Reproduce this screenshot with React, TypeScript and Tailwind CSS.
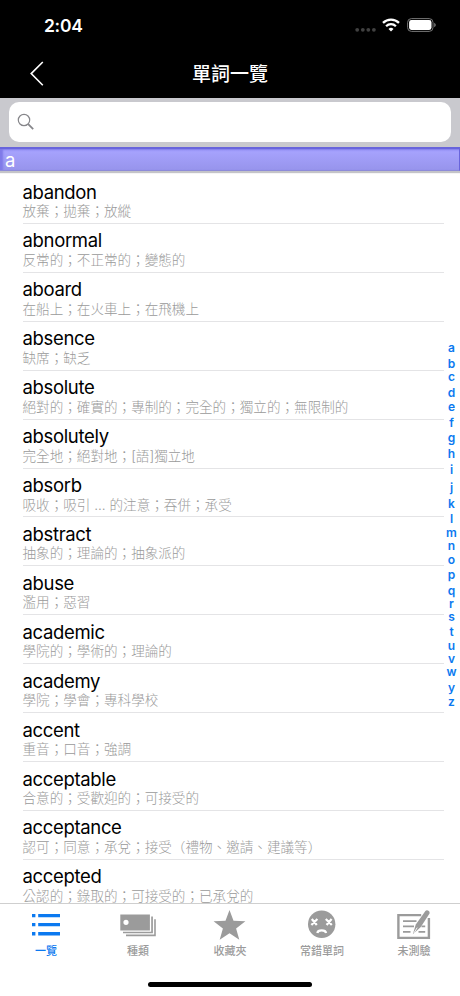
import React, { useState } from 'react';

interface Word {
  term: string;
  meaning: string;
}

const words: Word[] = [
  { term: 'abandon', meaning: '放棄；拋棄；放縱' },
  { term: 'abnormal', meaning: '反常的；不正常的；變態的' },
  { term: 'aboard', meaning: '在船上；在火車上；在飛機上' },
  { term: 'absence', meaning: '缺席；缺乏' },
  { term: 'absolute', meaning: '絕對的；確實的；專制的；完全的；獨立的；無限制的' },
  { term: 'absolutely', meaning: '完全地；絕對地；[語]獨立地' },
  { term: 'absorb', meaning: '吸收；吸引 ... 的注意；吞併；承受' },
  { term: 'abstract', meaning: '抽象的；理論的；抽象派的' },
  { term: 'abuse', meaning: '濫用；惡習' },
  { term: 'academic', meaning: '學院的；學術的；理論的' },
  { term: 'academy', meaning: '學院；學會；專科學校' },
  { term: 'accent', meaning: '重音；口音；強調' },
  { term: 'acceptable', meaning: '合意的；受歡迎的；可接受的' },
  { term: 'acceptance', meaning: '認可；同意；承兌；接受（禮物、邀請、建議等）' },
  { term: 'accepted', meaning: '公認的；錄取的；可接受的；已承兌的' }
];

// Each letter with the height of its slot in the index strip
const indexLetters: [string, number][] = [
  ['a', 14], ['b', 16], ['c', 13.4], ['d', 16], ['e', 13.7], ['f', 16],
  ['g', 15.3], ['h', 15.7], ['i', 15.6], ['j', 18.4], ['k', 15.6], ['l', 15.4],
  ['m', 14], ['n', 13], ['o', 13.6], ['p', 15.7], ['q', 15.7], ['r', 13],
  ['s', 13.3], ['t', 14.7], ['u', 13.6], ['v', 13], ['w', 13.7], ['y', 15.3], ['z', 14]
];

const ListIcon = () => (
  <svg width="30" height="30" viewBox="0 0 30 30" fill="currentColor">
    <path d="M1 3.9h3.4v3.4H1zM7.2 3.9H29v3.4H7.2zM1 12.9h3.4v3.4H1zM7.2 12.9H29v3.4H7.2zM1 22h3.4v3.4H1zM7.2 22H29v3.4H7.2z" />
  </svg>
);

const CardsIcon = () => (
  <svg width="38" height="30" viewBox="0 0 38 30" fill="currentColor">
    <path fillRule="evenodd" d="M1.3 4.4h29.6v16H1.3zM7 9.7a2.6 2.6 0 1 0 0 5.2a2.6 2.6 0 0 0 0-5.2z" />
    <path d="M32.2 6.5h1.7v16.8H4v-1.6h28.2zM35.2 9.2h1.6v17H7v-1.6h28.2z" />
  </svg>
);

const StarIcon = () => (
  <svg width="34" height="30" viewBox="0 0 34 30" fill="currentColor">
    <path d="M16.5 0l4 10.8 11.9.5-9.3 7.2 3.2 11.2-9.8-6.5-9.8 6.5 3.2-11.2L.6 11.3l11.9-.5z" />
  </svg>
);

const SadIcon = () => (
  <svg width="30" height="30" viewBox="0 0 30 30" fill="none">
    <circle cx="14.7" cy="14.3" r="13.7" fill="currentColor" />
    <path d="M4.8 9l5 6M10.4 9l-6 6M18.8 9l6 6M24.6 9l-5 6" stroke="#fff" strokeWidth="2.2" />
    <path d="M10.3 23c.6-3.4 8.2-3.4 8.8 0" stroke="#fff" strokeWidth="2.2" />
  </svg>
);

const NoteIcon = () => (
  <svg width="36" height="30" viewBox="0 0 36 30" fill="none" stroke="currentColor">
    <path d="M25.2 5.1H2.4v22.8h30.5V8" strokeWidth="2.4" />
    <path d="M7 11.2h13.5M7 16.3h11M7 21.8h7.5M25.5 16.3h3.7M22.5 21.8h6.7" strokeWidth="1.8" />
    <path d="M29.4.9c1.7-1.9 5.2.4 4 2.9L24.8 17l-8 7.2 3-9.6z" fill="currentColor" stroke="none" />
    <path d="M17.8 23.2l3.4-5.6" stroke="#fff" strokeWidth=".9" />
  </svg>
);

const tabs = [
  { label: '一覽', icon: <ListIcon /> },
  { label: '種類', icon: <CardsIcon /> },
  { label: '收藏夾', icon: <StarIcon /> },
  { label: '常錯單詞', icon: <SadIcon /> },
  { label: '未測驗', icon: <NoteIcon /> }
];

const StatusBar = () => (
  <div className="h-[50px] flex items-center justify-between pl-[44px] pr-[24px]">
    <span className="pt-[2px] text-[17.5px] font-semibold leading-none tracking-[-0.3px]">2:04</span>
    <div className="flex items-center">
      <svg width="22" height="14" viewBox="0 0 22 14" fill="#414141">
        <circle cx="2.2" cy="11.8" r="1.9" />
        <circle cx="7.8" cy="11.8" r="1.9" />
        <circle cx="13.3" cy="11.8" r="1.9" />
        <circle cx="18.9" cy="11.8" r="1.9" />
      </svg>
      <svg className="ml-[5px]" width="18" height="14" viewBox="0 0 18 14" fill="none" stroke="#fff" strokeWidth="2.3">
        <path d="M1 4.9a11.4 11.4 0 0 1 16 0M4.1 8.2a7 7 0 0 1 9.8 0" />
        <path d="M9 13.6L6.5 11a3.6 3.6 0 0 1 5 0z" fill="#fff" stroke="none" />
      </svg>
      <svg className="ml-[7px]" width="29" height="14" viewBox="0 0 29 14" fill="none">
        <rect x=".6" y=".6" width="25.4" height="12.8" rx="3.8" stroke="#777" />
        <rect x="2.1" y="2.1" width="22.4" height="9.8" rx="2.3" fill="#fff" />
        <path d="M27.2 4.8q1.6.8 1.6 2.2t-1.6 2.2z" fill="#777" />
      </svg>
    </div>
  </div>
);

const WordRow: React.FC<{ word: Word }> = ({ word }) => (
  <li className="h-[48.93px] shrink-0 border-b border-[#e4e4e6] pt-[6.5px] whitespace-nowrap">
    <div className="text-[18.5px] leading-[21.5px] tracking-[-0.34px] text-black">{word.term}</div>
    <div className="text-[13.58px] leading-[16px] font-light text-[#9a9a9a]">{word.meaning}</div>
  </li>
);

export default function App() {
  const [query, setQuery] = useState('');
  const [activeTab, setActiveTab] = useState(0);

  return (
    <div className="w-[460px] h-[996px] flex flex-col overflow-hidden bg-white font-[Inter,'Noto_Sans_CJK_TC',sans-serif]">
      {/* Navigation header */}
      <header className="h-[98px] shrink-0 bg-black text-white">
        <StatusBar />
        <div className="h-[47px] grid grid-cols-[1fr_auto_1fr] items-center">
          <button className="ml-[30px] w-4" aria-label="Back">
            <svg width="14" height="26" viewBox="0 0 14 26" fill="none" stroke="#fff" strokeWidth="1.6">
              <path d="M12.8 1L1.2 12.6l11.6 11.6" />
            </svg>
          </button>
          <h1 className="pt-[2px] text-[19px] font-medium leading-none">單詞一覽</h1>
        </div>
      </header>

      {/* Search */}
      <div className="h-[49px] shrink-0 bg-[#c9c9ce] px-[9px] pt-1">
        <label className="h-10 flex items-center rounded-[10px] bg-white pl-2">
          <svg width="18" height="18" viewBox="0 0 18 18" fill="none" stroke="#86868a">
            <circle cx="7" cy="7" r="5.7" strokeWidth="1.2" />
            <path d="M11.2 11.2l5 5" strokeWidth="1.8" />
          </svg>
          <input
            className="flex-1 ml-2 outline-none"
            value={query}
            onChange={e => setQuery(e.target.value)}
          />
        </label>
      </div>

      {/* Section title */}
      <div className="z-10 h-6 shrink-0 border-t-2 border-r border-b border-t-[#6864dc] border-r-[#6864dc] border-b-[#8d8bd8] bg-linear-to-b from-[#a8a4ff] to-[#9794ec] shadow-[0_2px_1px_#c4c4c8,inset_3px_1px_2px_#7f7ae8] pl-[5px] text-white text-[18.5px] leading-[23px]">
        a
      </div>

      <main className="flex-1 min-h-0 flex overflow-hidden">
        <ul className="w-[421.5px] ml-[22.5px] pt-[4px] flex flex-col">
          {words.map(word => (
            <WordRow key={word.term} word={word} />
          ))}
        </ul>
        <nav className="w-[15px] pt-[169px] flex flex-col items-center text-[12px] font-semibold text-[#0b79f0]">
          {indexLetters.map(([letter, height]) => (
            <div key={letter} className="shrink-0 flex items-end leading-[12px]" style={{ height }}>
              {letter}
            </div>
          ))}
        </nav>
      </main>

      {/* Tab bar */}
      <footer className="h-[93px] shrink-0 border-t border-[#cfcfcf] bg-white flex flex-col items-center">
        <div className="h-[80px] w-full grid grid-cols-5 pt-[6px]">
          {tabs.map((tab, index) => (
            <button
              key={tab.label}
              onClick={() => setActiveTab(index)}
              className={`flex flex-col items-center ${index === activeTab ? 'text-[#0b79f0]' : 'text-[#9b9b9b]'}`}
            >
              {tab.icon}
              <span className="mt-[4px] text-[11px] leading-[14px] font-medium">{tab.label}</span>
            </button>
          ))}
        </div>
        <div className="w-[164px] h-[5px] shrink-0 mt-[-2px] rounded-full bg-black" />
      </footer>
    </div>
  );
}
